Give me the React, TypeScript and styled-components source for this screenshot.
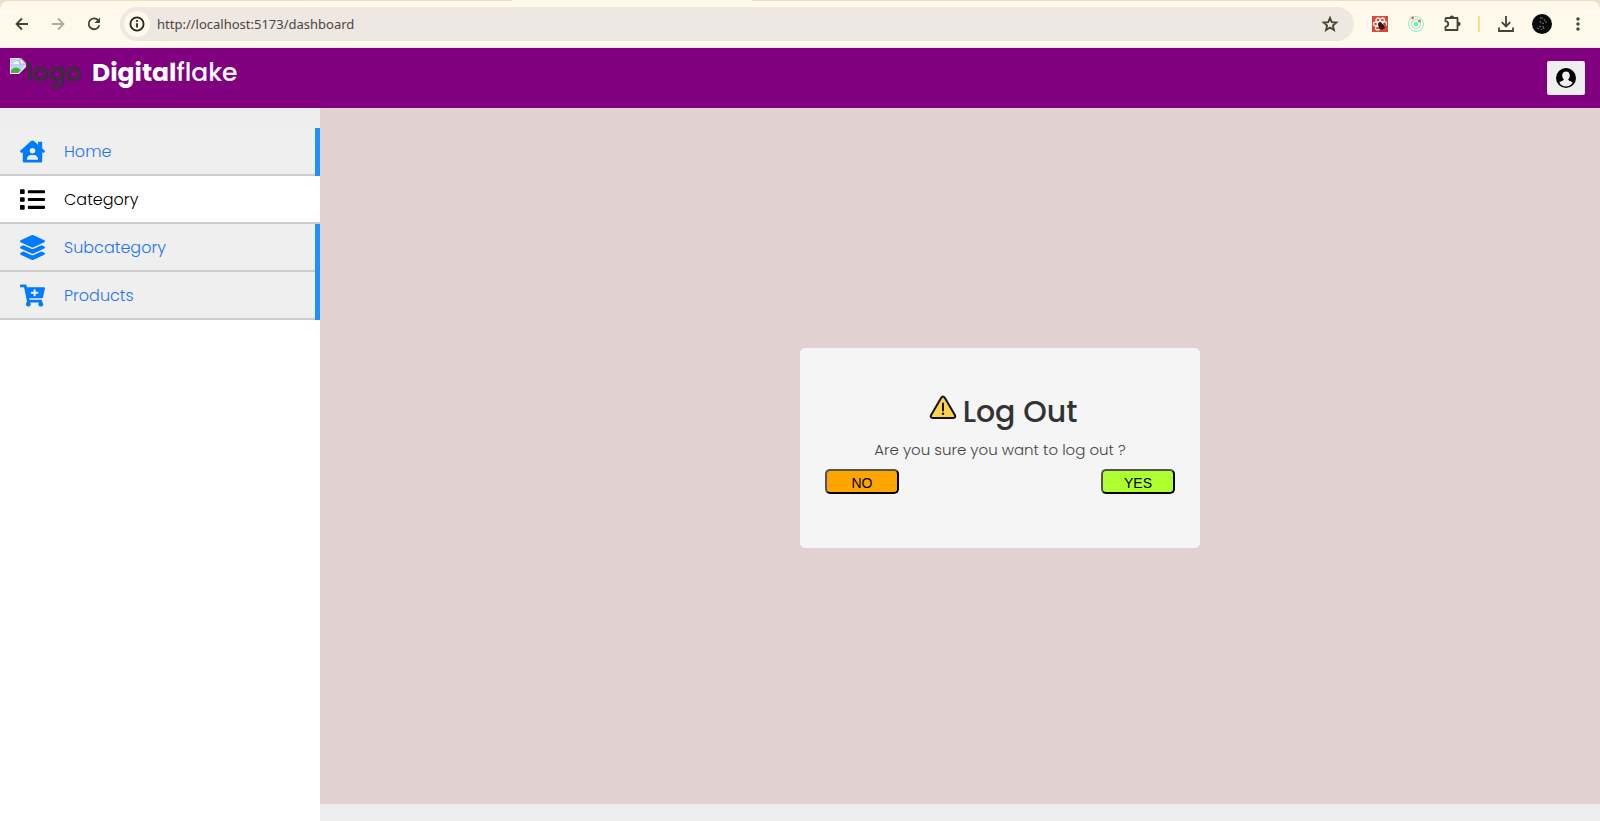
import React from "react";
import styled, { createGlobalStyle, css } from "styled-components";
import { FaHouseUser, FaList, FaLayerGroup, FaCartPlus } from "react-icons/fa";
import { MdMoreVert } from "react-icons/md";

const brandFont = `Poppins, Inter, "Liberation Sans", sans-serif`;

const GlobalStyle = createGlobalStyle`
  * { box-sizing: border-box; }
  body { margin: 0; background: #fff; font-family: ${brandFont}; }
  button { font-family: inherit; cursor: pointer; }
`;

const Screen = styled.div`
  display: flex;
  flex-direction: column;
  min-height: 100vh;
`;

/* Browser toolbar, with the foot of the open tab joining it from above */
const TabStrip = styled.div`
  padding-top: 1px;
  background: linear-gradient(90deg, #e8dfc4 32%, #fff9eb 32%, #fff9eb 47%, #e8dfc4 47%);
`;

const BrowserBar = styled.div`
  display: flex;
  align-items: center;
  gap: 16px;
  height: 47px;
  padding: 0 12px;
  background: #fff9eb;
  border-bottom: 1px solid #ebe6d9;
  border-radius: 8px 8px 0 0;
`;

const ToolButton = styled.button<{ $dim?: boolean }>`
  display: flex;
  align-items: center;
  justify-content: center;
  width: 20px;
  height: 20px;
  padding: 0;
  border: 0;
  background: none;
  color: ${(p) => (p.$dim ? "#b1aca0" : "#47432f")};
`;

const AddressBar = styled.div`
  display: flex;
  flex: 1;
  align-items: center;
  gap: 7px;
  height: 34px;
  padding: 0 14px 0 4px;
  border-radius: 17px;
  background: #efe7e1;
`;

const SiteInfo = styled.button`
  display: flex;
  align-items: center;
  justify-content: center;
  width: 26px;
  height: 26px;
  padding: 0;
  border: 0;
  border-radius: 50%;
  background: #fff9eb;
  color: #25231b;
`;

const AddressInput = styled.input`
  flex: 1;
  min-width: 0;
  padding: 0;
  border: 0;
  outline: 0;
  background: transparent;
  color: #4b4640;
  font: 13px "Noto Sans", sans-serif;
`;

const Divider = styled.span`
  width: 2px;
  height: 16px;
  background: #f8dd86;
`;

/* Application */
const Header = styled.header`
  display: flex;
  align-items: flex-start;
  justify-content: space-between;
  height: 60px;
  padding: 8px 15px 0 10px;
  background: purple;
`;

const Brand = styled.div`
  display: flex;
  align-items: flex-start;
  gap: 10px;
  color: #fff;
  font-size: 25px;
  font-weight: 500;
  line-height: 34px;

  b { font-weight: 700; }
`;

const BrokenLogo = styled.span`
  display: flex;
  align-items: flex-start;
  width: 72px;
  color: #333;

  svg { flex: none; margin-top: 2px; }
`;

const AccountButton = styled.button`
  display: flex;
  align-items: center;
  justify-content: center;
  width: 38px;
  height: 34px;
  margin-top: 5px;
  padding: 0;
  border: 0;
  border-radius: 2px;
  background: #efefef;
  color: #000;
`;

const Body = styled.div`
  display: flex;
  flex: 1;
`;

const Sidebar = styled.nav`
  width: 20%;
  border-top: 20px solid #ededed;
  background: #fff;
`;

const NavList = styled.ul`
  margin: 0;
  padding: 0;
  list-style: none;
`;

const NavItem = styled.li<{ $active: boolean }>`
  border-right: ${(p) => (p.$active ? "0" : "5px solid #1e90ff")};
`;

const NavLink = styled.a<{ $active: boolean }>`
  display: flex;
  align-items: center;
  gap: 19px;
  height: 48px;
  padding-left: 20px;
  border-bottom: 2px solid #ccc;
  background: #efefef;
  color: #1f75f0;
  font-size: 16px;
  font-weight: 300;
  text-decoration: none;

  svg { color: #007bff; }

  ${(p) =>
    p.$active &&
    css`
      background: #fff;
      color: #000;
      svg { color: #000; }
    `}
`;

const Content = styled.div`
  display: flex;
  flex: 1;
  flex-direction: column;
  padding-bottom: 17px;
  background: #ededed;
`;

const Stage = styled.main`
  display: flex;
  flex: 1;
  align-items: center;
  justify-content: center;
  padding: 0 0 16px 80px;
  background: #e1d1d0;
`;

const Dialog = styled.section`
  width: 400px;
  min-height: 200px;
  padding: 40px 25px;
  border-radius: 5px;
  background: #f5f5f5;
  text-align: center;
`;

const DialogTitle = styled.h1`
  display: flex;
  align-items: flex-start;
  justify-content: center;
  gap: 6px;
  margin: 0;
  padding-left: 6px;
  color: #333;
  font-size: 30px;
  font-weight: 500;
  line-height: 48px;

  svg { margin-top: 7px; }
`;

const DialogText = styled.p`
  margin: 0;
  padding-bottom: 6px;
  color: #444;
  font-size: 15px;
  font-weight: 300;
  line-height: 27px;
`;

const Actions = styled.div`
  display: flex;
  justify-content: space-between;
`;

const ActionButton = styled.button<{ $fill: string }>`
  width: 74px;
  height: 25px;
  padding: 2px 0 0;
  border: 2px outset #000;
  border-radius: 5px;
  background: ${(p) => p.$fill};
  color: #000;
  font: 14px/20px "Liberation Sans", Arial, sans-serif;
`;

const LineIcon = ({ d, children }: { d: string; children?: React.ReactNode }) => (
  <svg width="18" height="18" viewBox="0 0 18 18" aria-hidden="true">
    <path d={d} fill="none" stroke="currentColor" strokeWidth="1.800" />
    {children}
  </svg>
);

const BackIcon = () => <LineIcon d="M15 9H4M9 3.500L3.500 9L9 14.500" />;

const ForwardIcon = () => <LineIcon d="M3 9h11M9 3.500L14.500 9L9 14.500" />;

const ReloadIcon = () => (
  <LineIcon d="M13.200 5.300A5.400 5.400 0 1 0 14.300 10.200">
    <path d="M15 2.500V8H9.500z" fill="currentColor" />
  </LineIcon>
);

const InfoIcon = () => (
  <LineIcon d="M9 2.400a6.600 6.600 0 1 0 0 13.200 6.600 6.600 0 0 0 0-13.200zM9 8.200v4.400">
    <circle cx="9" cy="6" r="1.100" fill="currentColor" />
  </LineIcon>
);

const StarIcon = () => (
  <LineIcon d="M9 2.800L10.800 7.100 15.400 7.500 11.900 10.500 13 15 9 12.600 5 15 6.100 10.500 2.600 7.500 7.200 7.100z" />
);

const BrokenImageIcon = () => (
  <svg width="16" height="16" viewBox="0 0 16 16" aria-hidden="true">
    <path d="M0 0h11l5 5v4L9 16H0z" fill="#e8edf5" />
    <path d="M1 1h9v5h5v2l-7 7H1z" fill="#b9d4f8" />
    <path d="M10 0l6 6h-6z" fill="#fff" stroke="#a9aeb8" />
    <path d="M3 6q0-2 2-2 1-2 3 0 1 0 1 2z" fill="#fff" />
    <path d="M1 15v-3q5-5 10 0l-3 3z" fill="#54a83a" />
  </svg>
);

const PuzzleIcon = () => (
  <svg width="20" height="20" viewBox="0 0 20 20" aria-hidden="true">
    <path
      d="M4.500 4H15.500V16H3.500V12.800Q6.200 12.500 6.200 10T3.500 7.200V5Q3.500 4 4.500 4Z"
      fill="none"
      stroke="currentColor"
      strokeWidth="1.800"
      strokeLinejoin="round"
    />
    <path d="M7.500 4a2.300 2.600 0 0 1 4.600 0zM16 7.700a2.600 2.300 0 0 1 0 4.600z" fill="currentColor" />
  </svg>
);

const DownloadIcon = () => (
  <LineIcon d="M9 1v10M4.800 7.200L9 11.400l4.200-4.200M2 12.500V16h14v-3.500" />
);

const PawExtensionIcon = () => (
  <svg width="16" height="16" viewBox="0 0 16 16" aria-hidden="true">
    <path d="M0 0h16v16H0z" fill="#d7483e" />
    <g fill="none" stroke="#fff2ea" strokeWidth="1.300">
      <circle cx="6" cy="4" r="2" />
      <circle cx="10.500" cy="4" r="2" />
      <circle cx="3.500" cy="8" r="2" />
      <circle cx="12.500" cy="7.500" r="2" />
      <circle cx="5.500" cy="12" r="2" />
    </g>
    <path d="M6 8l2-2 4 3 1 3-3 2-3-2z" fill="#3b1714" />
    <path d="M8 6l1 2M12 9l2 0M8 11l-1 2" stroke="#3b1714" />
  </svg>
);

const OrbitExtensionIcon = () => (
  <svg width="16" height="16" viewBox="0 0 16 16" aria-hidden="true">
    <circle cx="8" cy="8" r="7.400" fill="none" stroke="#7eebcd" />
    <circle cx="8" cy="8" r="4.500" fill="none" stroke="#7eebcd" />
    <circle cx="8" cy="8" r="2.200" fill="#5ff0b4" />
    <circle cx="4.500" cy="1.800" r="1.500" fill="#e0725a" />
    <circle cx="11.500" cy="5" r="1.500" fill="#e0725a" />
  </svg>
);

const ProfileIcon = () => (
  <svg width="20" height="20" viewBox="0 0 20 20" aria-hidden="true">
    <circle cx="10" cy="10" r="10" fill="#090909" />
    <path
      d="M8 4l3 0M12 5l1 2M8 7l1 2M12 9l-2 1M7 12l2 1M11 12l1 3M5 14l2 1M14 7l0 2M9 15l1 1"
      fill="none"
      stroke="#777"
    />
  </svg>
);

const AccountIcon = () => (
  <svg width="20" height="20" viewBox="0 0 20 20" aria-hidden="true">
    <circle cx="10" cy="10" r="10" fill="currentColor" />
    <path
      d="M10 3.600c2.300 0 3.800 1.600 3.800 3.900 0 1.800-.7 3-1.700 3.900.2 1.400 3.700 1.400 4.500 3.600A8.300 8.300 0 0 1 10 18.400 8.300 8.300 0 0 1 3.400 15c.8-2.200 4.300-2.200 4.500-3.600-1-.9-1.700-2.100-1.700-3.900 0-2.300 1.500-3.900 3.800-3.900z"
      fill="#efefef"
    />
  </svg>
);

const WarningIcon = () => (
  <svg width="28" height="25" viewBox="0 0 28 25" aria-hidden="true">
    <path
      d="M12.200 2.800Q14 .400 15.800 2.800L26 20.200Q27 23 24.200 23H3.800Q1 23 2 20.200Z"
      fill="#ffd04e"
      stroke="#111"
      strokeWidth="2"
      strokeLinejoin="round"
    />
    <path d="M14 8.500v7" stroke="#111" strokeWidth="2" strokeLinecap="round" />
    <circle cx="14" cy="18.800" r="1.200" fill="#111" />
  </svg>
);

const navItems = [
  { label: "Home", icon: FaHouseUser, active: false },
  { label: "Category", icon: FaList, active: true },
  { label: "Subcategory", icon: FaLayerGroup, active: false },
  { label: "Products", icon: FaCartPlus, active: false },
];

export default function App() {
  return (
    <Screen>
      <GlobalStyle />
      <TabStrip>
        <BrowserBar>
          <ToolButton aria-label="Back"><BackIcon /></ToolButton>
          <ToolButton aria-label="Forward" $dim><ForwardIcon /></ToolButton>
          <ToolButton aria-label="Reload"><ReloadIcon /></ToolButton>
          <AddressBar>
            <SiteInfo aria-label="Site information"><InfoIcon /></SiteInfo>
            <AddressInput aria-label="Address" defaultValue="http://localhost:5173/dashboard" />
            <ToolButton aria-label="Bookmark"><StarIcon /></ToolButton>
          </AddressBar>
          <ToolButton aria-label="Paw extension"><PawExtensionIcon /></ToolButton>
          <ToolButton aria-label="Orbit extension"><OrbitExtensionIcon /></ToolButton>
          <ToolButton aria-label="Extensions"><PuzzleIcon /></ToolButton>
          <Divider />
          <ToolButton aria-label="Downloads"><DownloadIcon /></ToolButton>
          <ToolButton aria-label="Profile"><ProfileIcon /></ToolButton>
          <ToolButton aria-label="Menu"><MdMoreVert size={20} /></ToolButton>
        </BrowserBar>
      </TabStrip>
      <Header>
        <Brand>
          <BrokenLogo><BrokenImageIcon />logo</BrokenLogo>
          <span><b>Digital</b>flake</span>
        </Brand>
        <AccountButton aria-label="Account"><AccountIcon /></AccountButton>
      </Header>
      <Body>
        <Sidebar>
          <NavList>
            {navItems.map(({ label, icon: Icon, active }) => (
              <NavItem key={label} $active={active}>
                <NavLink href="#" $active={active}>
                  <Icon size={25} />
                  {label}
                </NavLink>
              </NavItem>
            ))}
          </NavList>
        </Sidebar>
        <Content>
          <Stage>
            <Dialog role="dialog" aria-labelledby="logout-title">
              <DialogTitle id="logout-title"><WarningIcon />Log Out</DialogTitle>
              <DialogText>Are you sure you want to log out ?</DialogText>
              <Actions>
                <ActionButton $fill="orange">NO</ActionButton>
                <ActionButton $fill="greenyellow">YES</ActionButton>
              </Actions>
            </Dialog>
          </Stage>
        </Content>
      </Body>
    </Screen>
  );
}
